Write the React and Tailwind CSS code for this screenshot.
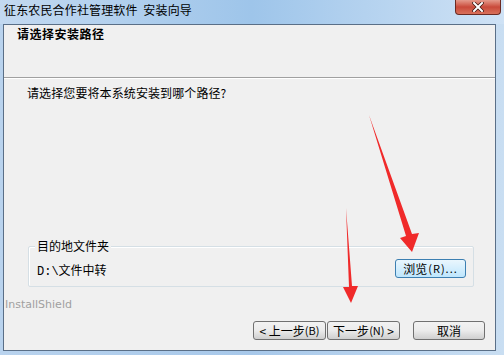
import React from "react";

const cjk = { fontFamily: '"Noto Sans CJK SC", "Liberation Sans", sans-serif' };

function WinButton({ children, className = "", focused = false }) {
  return (
    <div
      className={
        "flex items-center justify-center h-[19px] rounded-[3px] border text-[12px] leading-none text-black " +
        (focused
          ? "border-[#3c7fb1] bg-gradient-to-b from-[#eaf6fd] to-[#bee6fd] "
          : "border-[#707070] bg-gradient-to-b from-[#f2f2f2] via-[#ebebeb] to-[#cfcfcf] ") +
        className
      }
      style={cjk}
    >
      {children}
    </div>
  );
}

export default function App() {
  return (
    <div className="relative w-[504px] h-[355px] overflow-hidden bg-gradient-to-r from-[#b9d3ee] via-[#a7c8ea] to-[#c9def2]" style={cjk}>
      {/* Title bar */}
      <div className="relative h-[24px] bg-gradient-to-r from-[#c3d9f0] via-[#9ec5ea] to-[#cfe2f5]">
        <div className="absolute left-[4px] top-[2px] text-[12px] leading-[16px] tracking-[0.15px] text-black">
          征东农民合作社管理软件&nbsp;&nbsp;安装向导
        </div>
        <div className="absolute left-[455px] top-0 w-[46px] h-[15px] rounded-b-[4px] border border-t-0 border-[#6b2a22] bg-gradient-to-b from-[#e49a8c] via-[#c9493a] to-[#d8705a] flex items-center justify-center">
          <svg width="12" height="10" viewBox="0 0 12 10">
            <path d="M2 1 L10 9 M10 1 L2 9" stroke="#3a1510" strokeWidth="3.4" strokeLinecap="square" />
            <path d="M2 1 L10 9 M10 1 L2 9" stroke="#ffffff" strokeWidth="2" strokeLinecap="square" />
          </svg>
        </div>
      </div>

      {/* Client area */}
      <div className="absolute left-[3px] top-[24px] w-[493px] h-[327px] border border-[#5a6f87] bg-[#f0f0f0] flex flex-col">
        {/* Header */}
        <div className="h-[53px] border-b border-[#a0a0a0] pl-[13px] pt-[1px]">
          <div className="text-[12px] font-bold leading-[16px] tracking-[0.5px] text-black">请选择安装路径</div>
        </div>
        <div className="h-px bg-white" />
        {/* Body */}
        <div className="pl-[23px] pt-[6px] text-[12px] leading-[16px] tracking-[0.1px] text-black">
          请选择您要将本系统安装到哪个路径?
        </div>

        {/* Group box */}
        <div className="relative mt-[145px] ml-[24px] w-[446px] h-[41px] border border-[#d5dfe5] rounded-[2px] shadow-[inset_1px_1px_0_#ffffff]">
          <div className="absolute left-[6px] top-[-9px] px-[2px] bg-[#f0f0f0] text-[12px] leading-[16px] text-black">
            目的地文件夹
          </div>
          <div className="absolute left-[8px] top-[15px] text-[12px] leading-[16px] text-black">
            <span style={{ fontFamily: '"Liberation Mono", monospace' }}>D:\</span>文件中转
          </div>
          <div className="absolute left-[366px] top-[12px]">
            <WinButton focused className="w-[71px] h-[19px]">
              浏览<span className="text-[11px] ml-[1px] tracking-[1px]">(R)...</span>
            </WinButton>
          </div>
        </div>

        <div className="pl-[1px] mt-[11px] text-[11px] leading-[14px] text-[#a0a0a0]" style={{ fontFamily: 'Tahoma, "DejaVu Sans", sans-serif' }}>
          InstallShield
        </div>

        {/* Buttons */}
        <div className="flex mt-[9px] ml-[249px]">
          <WinButton className="w-[73px]">&lt; 上一步<span className="text-[11px]">(B)</span></WinButton>
          <WinButton className="w-[73px] ml-[1px]">下一步<span className="text-[11px]">(N)</span>&nbsp;&gt;</WinButton>
          <WinButton className="w-[72px] ml-[13px]">取消</WinButton>
        </div>
      </div>

      {/* Red annotation arrows */}
      <svg className="absolute left-0 top-0 pointer-events-none" width="504" height="355" viewBox="0 0 504 355">
        <polygon points="369,115 406,236 400,238 412,252 419,233 412,234" fill="#f02a2a" />
        <polygon points="346,208 349,287 343,287 351,303 358,286 352,286" fill="#f02a2a" />
      </svg>
    </div>
  );
}
